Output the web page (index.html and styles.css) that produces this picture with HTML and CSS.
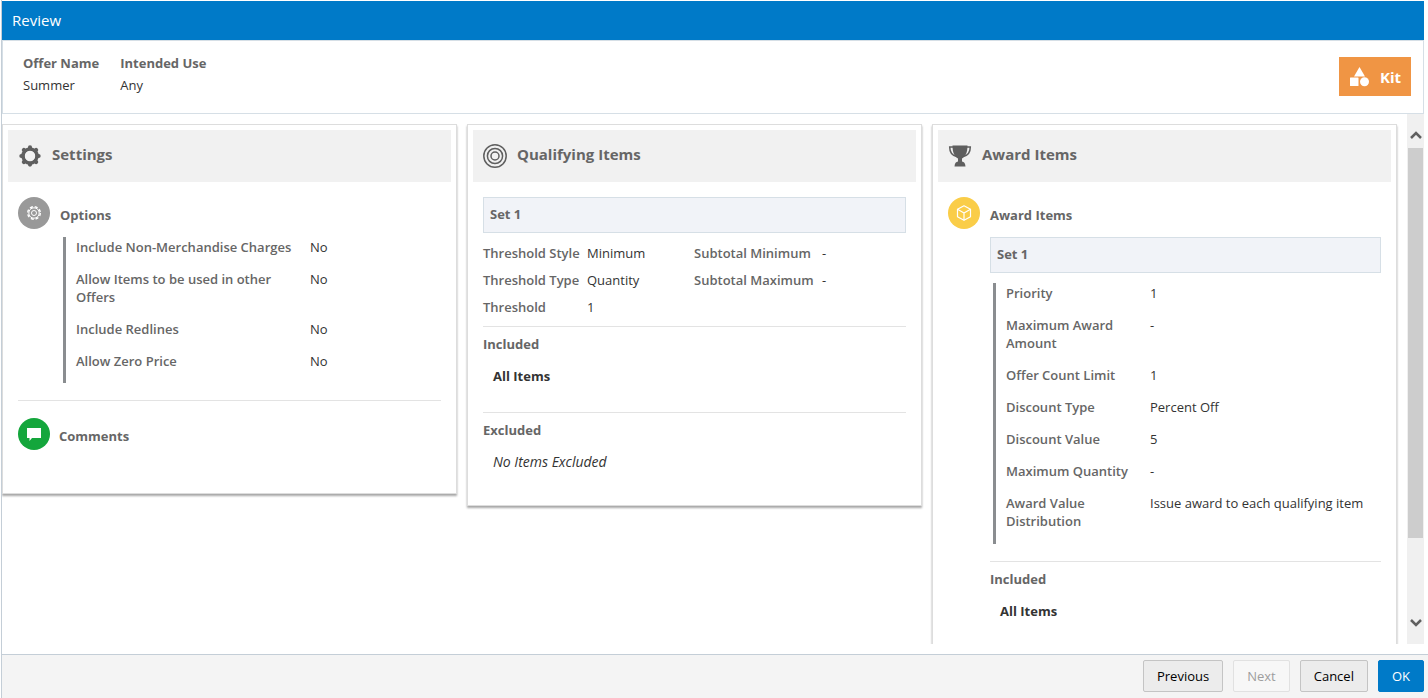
FILE: index.html
```html
<!DOCTYPE html>
<html lang="en">
<head>
    <meta charset="utf-8">
    <title>Review</title>
    <link rel="stylesheet" href="styles.css">
</head>
<body>
    <div class="dialog">
        <h1 class="dialog-title">Review</h1>

        <div class="summary">
            <dl class="summary-list">
                <div>
                    <dt>Offer Name</dt>
                    <dd>Summer</dd>
                </div>
                <div>
                    <dt>Intended Use</dt>
                    <dd>Any</dd>
                </div>
            </dl>
            <div class="kit">
                <svg width="20" height="20" viewBox="0 0 20 20" fill="#fff">
                    <path d="M10.500 0L16 9.500H5Z"/>
                    <rect x="1" y="10.500" width="8.500" height="8.500" rx="0.500"/>
                    <circle cx="15.500" cy="14.700" r="4.500"/>
                </svg>
                <span>Kit</span>
            </div>
        </div>

        <div class="scroll-area">
            <div class="cards">
                <section class="card">
                    <h2 class="card-header">
                        <svg width="24" height="24" viewBox="0 0 24 24" stroke="#5f5f5f">
                            <circle cx="12" cy="12" r="6.900" fill="none" stroke-width="3.600"/>
                            <g stroke-width="4.200" stroke-linecap="round">
                                <path d="M12 3.400V5M12 19v1.600M3.400 12H5M19 12h1.600"/>
                                <path d="M5.900 5.900L7 7M17 17l1.100 1.100M18.100 5.900L17 7M7 17l-1.100 1.100"/>
                            </g>
                            <circle cx="12" cy="12" r="5.200" fill="#f1f1f1" stroke="none"/>
                        </svg>
                        <span>Settings</span>
                    </h2>
                    <div class="card-body">
                        <div class="section-title">
                            <span class="circle gray">
                                <svg width="16" height="16" viewBox="0 0 16 16" fill="none" stroke="#fff">
                                    <circle cx="8" cy="8" r="6.300" stroke-width="1.400" stroke-dasharray="3 1.950"/>
                                    <circle cx="8" cy="8" r="5.200"/>
                                    <circle cx="8" cy="8" r="2.500"/>
                                </svg>
                            </span>
                            <h3>Options</h3>
                        </div>
                        <dl class="details options">
                            <dt>Include Non-Merchandise Charges</dt>
                            <dd>No</dd>
                            <dt>Allow Items to be used in other Offers</dt>
                            <dd>No</dd>
                            <dt>Include Redlines</dt>
                            <dd>No</dd>
                            <dt>Allow Zero Price</dt>
                            <dd>No</dd>
                        </dl>
                        <hr>
                        <div class="section-title comments">
                            <span class="circle green">
                                <svg width="16" height="16" viewBox="0 0 16 16" fill="#fff">
                                    <path d="M1 2h14v10H6l-2.500 3V12H1Z"/>
                                </svg>
                            </span>
                            <h3>Comments</h3>
                        </div>
                    </div>
                </section>

                <section class="card">
                    <h2 class="card-header">
                        <svg width="24" height="24" viewBox="0 0 24 24" fill="none" stroke="#5f5f5f" stroke-width="1.500">
                            <circle cx="12" cy="12" r="11.200"/>
                            <circle cx="12" cy="12" r="7.600"/>
                            <circle cx="12" cy="12" r="4"/>
                        </svg>
                        <span>Qualifying Items</span>
                    </h2>
                    <div class="card-body">
                        <div class="set">Set 1</div>
                        <dl class="thresholds">
                            <dt>Threshold Style</dt>
                            <dd>Minimum</dd>
                            <dt>Subtotal Minimum</dt>
                            <dd>-</dd>
                            <dt>Threshold Type</dt>
                            <dd>Quantity</dd>
                            <dt>Subtotal Maximum</dt>
                            <dd>-</dd>
                            <dt>Threshold</dt>
                            <dd>1</dd>
                        </dl>
                        <div class="item-group">
                            <h4>Included</h4>
                            <p class="all-items">All Items</p>
                        </div>
                        <div class="item-group">
                            <h4>Excluded</h4>
                            <p class="no-items">No Items Excluded</p>
                        </div>
                    </div>
                </section>

                <section class="card">
                    <h2 class="card-header">
                        <svg width="24" height="24" viewBox="0 0 24 24">
                            <path fill="#5f5f5f" d="M4.500 1.500h15c0 7-2 11-5.500 13v3c2 0.300 3.200 1.500 3.500 5h-11c0.300-3.500 1.500-4.700 3.500-5v-3C6.500 12.500 4.500 8.500 4.500 1.500Z"/>
                            <path fill="none" stroke="#5f5f5f" stroke-width="1.500" d="M5.500 3H1.700c0 5 2.500 8.500 7 9.500M18.500 3h3.800c0 5-2.500 8.500-7 9.500"/>
                        </svg>
                        <span>Award Items</span>
                    </h2>
                    <div class="card-body">
                        <div class="section-title">
                            <span class="circle yellow">
                                <svg width="16" height="16" viewBox="0 0 16 16" fill="none" stroke="#fff" stroke-width="1.200" stroke-linejoin="round">
                                    <path d="M8 0.800L14.500 4.300V11.700L8 15.200L1.500 11.700V4.300Z"/>
                                    <path d="M1.500 4.300L8 8L14.500 4.300M8 8V15.200"/>
                                </svg>
                            </span>
                            <h3>Award Items</h3>
                        </div>
                        <div class="award">
                            <div class="set">Set 1</div>
                            <dl class="details award-details">
                                <dt>Priority</dt>
                                <dd>1</dd>
                                <dt>Maximum Award Amount</dt>
                                <dd>-</dd>
                                <dt>Offer Count Limit</dt>
                                <dd>1</dd>
                                <dt>Discount Type</dt>
                                <dd>Percent Off</dd>
                                <dt>Discount Value</dt>
                                <dd>5</dd>
                                <dt>Maximum Quantity</dt>
                                <dd>-</dd>
                                <dt>Award Value Distribution</dt>
                                <dd>Issue award to each qualifying item</dd>
                            </dl>
                            <div class="item-group">
                                <h4>Included</h4>
                                <p class="all-items">All Items</p>
                            </div>
                        </div>
                    </div>
                </section>
            </div>

            <div class="scrollbar">
                <svg width="12" height="8" viewBox="0 0 12 8"><path d="M1 7L6 2L11 7" fill="none" stroke="#606060" stroke-width="2.500"/></svg>
                <div class="thumb"></div>
                <svg width="12" height="8" viewBox="0 0 12 8"><path d="M1 1L6 6L11 1" fill="none" stroke="#606060" stroke-width="2.500"/></svg>
            </div>
        </div>

        <div class="buttons">
            <button type="button">Previous</button>
            <button type="button" disabled>Next</button>
            <button type="button">Cancel</button>
            <button type="button" class="primary">OK</button>
        </div>
    </div>
</body>
</html>
```
FILE: styles.css
```css
* {
    box-sizing: border-box;
}

body {
    margin: 0;
    font-family: "Open Sans", "Noto Sans", sans-serif;
    font-size: 13px;
    line-height: 18px;
    color: #333;
    background-color: #fff;
}

h1, h2, h3, h4, p, dl, dd {
    margin: 0;
}

.dialog {
    display: flex;
    flex-direction: column;
    height: 100vh;
    margin-left: 1px;
    padding-top: 1px;
    border-left: 1px solid #c4ced7;
}

.dialog-title {
    margin-right: 4px;
    padding: 0 10px;
    font-size: 15px;
    font-weight: 400;
    line-height: 39px;
    color: #fff;
    background-color: #007ac8;
}

.summary {
    display: flex;
    justify-content: space-between;
    align-items: flex-start;
    height: 74px;
    margin-right: 4px;
    padding: 11px 12px 0 20px;
    border: 1px solid #d6dfe6;
}

.summary-list {
    display: flex;
    gap: 21px;
    line-height: 22px;
}

.summary-list dt {
    font-weight: 700;
    color: #666;
}

.kit {
    display: flex;
    align-items: center;
    gap: 11px;
    height: 39px;
    margin-top: 5px;
    padding: 0 10px;
    font-size: 15px;
    font-weight: 700;
    color: #fff;
    background-color: #f09544;
}

.scroll-area {
    display: flex;
    flex: 1;
    min-height: 0;
    margin: 0 4px 10px 0;
    overflow: hidden;
}

.cards {
    display: grid;
    flex: 1;
    grid-template-columns: 455fr 455fr 465fr;
    gap: 10px;
    align-items: start;
    padding: 10px 10px 0 0;
}

.card {
    padding: 5px;
    border: 1px solid #ddd;
    box-shadow: 0 2px 2px rgba(0, 0, 0, 0.35);
}

.card-header {
    display: flex;
    align-items: center;
    gap: 10px;
    height: 52px;
    padding: 0 10px;
    font-size: 15px;
    font-weight: 700;
    color: #666;
    background-color: #f1f1f1;
}

.card-header span {
    padding-bottom: 4px;
}

.card-body {
    padding: 15px 10px 26px;
}

.section-title {
    display: flex;
    align-items: center;
    gap: 10px;
}

.section-title h3 {
    padding-top: 4px;
    font-size: 13px;
    font-weight: 700;
    color: #666;
}

.circle {
    display: flex;
    align-items: center;
    justify-content: center;
    width: 32px;
    height: 32px;
    border-radius: 50%;
}

.gray {
    background-color: #999;
}

.green {
    background-color: #14a63c;
}

.yellow {
    background-color: #facd48;
}

.details {
    display: grid;
    row-gap: 14px;
    border-left: 3px solid #8a8d90;
    padding: 1px 0 13px 10px;
}

.details dt, .thresholds dt {
    font-weight: 600;
    color: #666;
}

.options {
    grid-template-columns: 220px 1fr;
    column-gap: 14px;
    margin: 8px 0 17px 45px;
}

hr {
    margin: 0;
    border: 0;
    border-top: 1px solid #e3e3e3;
}

.comments {
    gap: 9px;
    padding: 17px 0 12px;
}

.set {
    height: 36px;
    padding: 0 6px;
    border: 1px solid #d6dfe6;
    font-weight: 700;
    line-height: 32px;
    color: #666;
    background-color: #f1f3f8;
}

.thresholds {
    display: grid;
    grid-template-columns: 97px 100px 121px 1fr;
    column-gap: 7px;
    padding: 7px 0 5px;
    line-height: 27px;
}

.item-group {
    padding: 8px 0 27px;
    border-top: 1px solid #e3e3e3;
}

.item-group:last-child {
    padding-bottom: 3px;
}

.item-group h4 {
    font-size: 13px;
    color: #666;
}

.item-group p {
    padding: 14px 10px 0;
}

.all-items {
    font-weight: 700;
}

.no-items {
    font-size: 14px;
    font-style: italic;
}

.award {
    margin: 8px 0 0 42px;
}

.award-details {
    grid-template-columns: 130px 1fr;
    column-gap: 14px;
    margin: 10px 0 17px 3px;
    padding-bottom: 14px;
}

.scrollbar {
    display: flex;
    flex-direction: column;
    align-items: center;
    width: 17px;
    padding: 17px 0;
    background-color: #f0f0f0;
}

.thumb {
    width: 15px;
    height: 390px;
    margin: 9px 0 auto;
    background-color: #cdcdcd;
}

.buttons {
    display: flex;
    justify-content: flex-end;
    gap: 10px;
    height: 44px;
    padding: 5px 4px 0;
    border-top: 1px solid #c4ced7;
    background-color: #f4f4f4;
}

button {
    height: 32px;
    padding: 0 13px;
    border: 1px solid #c4c4c4;
    border-radius: 2px;
    font-family: inherit;
    font-size: 13px;
    line-height: 18px;
    color: #000;
    background-color: #ececec;
}

button:disabled {
    border-color: #e1e1e1;
    color: #9e9e9e;
    background-color: #f7f7f7;
}

.primary {
    border-color: #007ac8;
    color: #fff;
    background-color: #007ac8;
}
```
